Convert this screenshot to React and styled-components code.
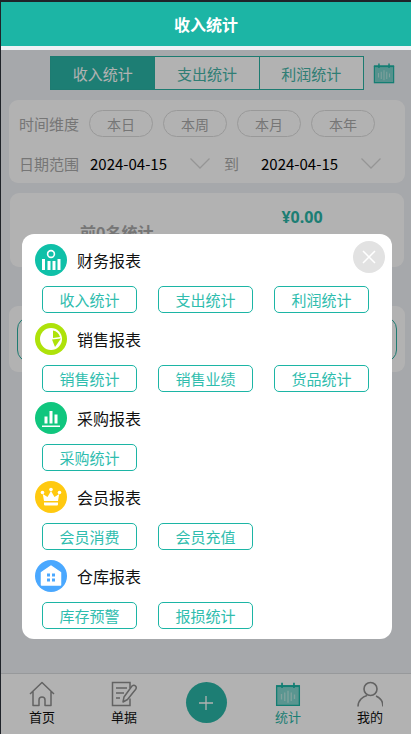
import React from "react";
import styled, { createGlobalStyle } from "styled-components";

const Global = createGlobalStyle`
  html, body { margin: 0; padding: 0; background: #1f2329; }
  * { box-sizing: border-box; }
  body { font-family: "Noto Sans CJK SC", "Noto Sans", sans-serif; }
`;

const Page = styled.div`
  position: relative;
  width: 411px;
  height: 734px;
  padding: 2px 0 0 1px;
  background: #1f2329;
  overflow: hidden;
  display: flex;
  flex-direction: column;
`;
const Header = styled.header`
  height: 44px;
  flex: none;
  background: #1cb5a5;
  color: #fff;
  font-size: 16px;
  font-weight: 700;
  display: flex;
  align-items: center;
  justify-content: center;
`;
const Main = styled.main`
  flex: 1;
  background: #eef1f5;
  padding: 10px 6px 0 8px;
  min-height: 0;
`;
const TabRow = styled.div`
  display: flex;
  align-items: center;
  padding-left: 41px;
  height: 34px;
`;
const Tabs = styled.div`
  display: flex;
  width: 314px;
  height: 34px;
  border: 1px solid #2ab0a2;
`;
const Tab = styled.div`
  flex: 1;
  display: flex;
  align-items: center;
  justify-content: center;
  font-size: 15px;
  background: ${p => (p.$active ? "#2ab5a6" : "#fff")};
  color: ${p => (p.$active ? "#fff" : "#45b5a8")};
  border-left: ${p => (p.$first ? "none" : "1px solid #2ab0a2")};
`;
const CalendarSlot = styled.div`
  margin-left: 9px;
  width: 22px;
  height: 22px;
  display: flex;
`;
const FilterCard = styled.section`
  margin-top: 10px;
  height: 83px;
  background: #fff;
  border-radius: 9px;
  padding: 10px 10px;
`;
const FilterRow = styled.div`
  display: flex;
  align-items: center;
  height: 27px;
  & + & { margin-top: 13px; }
`;
const Label = styled.span`
  width: 60px;
  flex: none;
  font-size: 15px;
  color: #aaa;
  white-space: nowrap;
`;
const Pill = styled.div`
  width: 64px;
  height: 27px;
  margin-left: ${p => (p.$first ? "10px" : "10px")};
  border: 1px solid #dcdcdc;
  border-radius: 14px;
  font-size: 14px;
  color: #aaa;
  display: flex;
  align-items: center;
  justify-content: center;
`;
const DateField = styled.div`
  width: 120px;
  margin-left: ${p => p.$ml}px;
  display: flex;
  align-items: center;
  justify-content: space-between;
  font-size: 15px;
  color: #000;
  white-space: nowrap;
`;
const To = styled.span`
  font-size: 15px;
  color: #aaa;
  margin-left: 14px;
`;
const SummaryCard = styled.section`
  margin-top: 10px;
  height: 74px;
  margin-left: 1px;
  margin-right: 1px;
  background: #fff;
  border-radius: 9px;
  display: flex;
  align-items: flex-start;
`;
const SummaryLabel = styled.div`
  margin: 27px 0 0 70px;
  font-size: 16px;
  line-height: 24px;
  font-weight: 700;
  color: #aaa;
`;
const SummaryValue = styled.div`
  margin: 13px 0 0 128px;
  font-size: 16px;
  line-height: 22px;
  font-weight: 700;
  color: #2ab5a6;
  font-family: "Noto Sans", sans-serif;
`;
const ListCard = styled.section`
  margin-top: 39px;
  height: 66px;
  background: #fff;
  border-radius: 9px;
  padding: 11px 8px 10px;
`;
const ListInner = styled.div`
  height: 45px;
  border: 1px solid #2ab0a2;
  border-radius: 12px;
`;
const Nav = styled.nav`
  height: 61px;
  flex: none;
  background: #fff;
  border-top: 1px solid #d9dcdf;
  display: flex;
  padding-top: 7px;
`;
const NavItem = styled.div`
  flex: 1;
  display: flex;
  flex-direction: column;
  align-items: center;
  font-size: 13px;
  line-height: 16px;
  color: ${p => (p.$active ? "#2ab5a6" : "#111")};
`;
const NavIcon = styled.div`
  width: 26px;
  height: 26px;
  margin-bottom: 2px;
`;
const AddButton = styled.div`
  width: 41px;
  height: 41px;
  border-radius: 50%;
  background: #2ab5a6;
  color: #fff;
  display: flex;
  align-items: center;
  justify-content: center;
  margin-top: 1px;
`;
const Overlay = styled.div`
  position: absolute;
  left: 1px;
  right: 0;
  top: 50px;
  bottom: 0;
  background: rgba(0, 0, 0, 0.3);
  padding: 184px 0 0 21px;
`;
const Modal = styled.div`
  position: relative;
  width: 370px;
  height: 405px;
  background: #fff;
  border-radius: 12px;
  padding: 10px 13px 0 13px;
`;
const CloseButton = styled.div`
  position: absolute;
  top: 7px;
  right: 7px;
  width: 32px;
  height: 32px;
  border-radius: 50%;
  background: #e2e2e2;
  display: flex;
  align-items: center;
  justify-content: center;
`;
const Section = styled.section`
  height: 79px;
`;
const SectionHead = styled.div`
  display: flex;
  align-items: center;
  height: 32px;
  font-size: 16px;
  color: #111;
  gap: 10px;
`;
const Badge = styled.div`
  width: 32px;
  height: 32px;
  border-radius: 50%;
  background: ${p => p.$bg};
  flex: none;
`;
const Links = styled.div`
  margin: 10px 0 0 7px;
  display: flex;
  gap: 21px;
`;
const LinkButton = styled.div`
  width: 95px;
  height: 27px;
  border: 1px solid #1cb5a5;
  border-radius: 5px;
  font-size: 15px;
  color: #2fbdae;
  display: flex;
  align-items: center;
  justify-content: center;
`;

const Stats = ({ size = 22 }) => (
  <svg width={size} height={size} viewBox="0 0 24 24">
    <path d="M1 4h22v19H1z" fill="#1cb5a5" opacity=".55" />
    <path d="M1.5 4.5h21v18h-21z" fill="none" stroke="#1cb5a5" strokeWidth="1.2" />
    <path d="M1 4h22v1.6H1z" fill="#1cb5a5" />
    <path d="M6.5 1.5v5M17.5 1.5v5" stroke="#1cb5a5" strokeWidth="1.6" />
    <path d="M6 12v5M9 10.5v8M12 9v11M15 10.5v8M18 12.5v4" stroke="#dff5f2" strokeOpacity=".6" strokeWidth="1.2" />
  </svg>
);
const Home = () => (
  <svg width="26" height="26" viewBox="0 0 26 26" fill="none" stroke="#8e8e8e" strokeWidth="1.5">
    <path d="M1 13 13 1.5 25 13M4 10.500V24.500h6V19q0-3 3-3t3 3v5.500h6V10.500" strokeLinejoin="round" />
  </svg>
);
const Doc = () => (
  <svg width="26" height="26" viewBox="0 0 26 26" fill="none" stroke="#8e8e8e" strokeWidth="1.5">
    <path d="M19 7V1.500H1.500v23H19v-7" />
    <path d="M5 7h11M5 12h8M5 17h4" />
    <path d="M12 21l1-5 8-11q2-1.500 3.500 0t0 3.500l-8 10z" strokeLinejoin="round" />
  </svg>
);
const User = () => (
  <svg width="26" height="26" viewBox="0 0 26 26" fill="none" stroke="#8e8e8e" strokeWidth="1.6">
    <circle cx="13.500" cy="8" r="6.500" />
    <path d="M1 25.500C1 19 6 15.500 10 14.500M26 25.500C26 21 23.500 17 19 15" />
  </svg>
);
const Finance = () => (
  <svg width="32" height="32" viewBox="0 0 32 32">
    <circle cx="16" cy="10" r="4.200" fill="#fff" />
    <circle cx="16" cy="10" r="2.600" fill="#0fc0a8" />
    <path d="M7 15h3v11H7zM12.500 17h3v9h-3zM17.500 17h3v9h-3zM22.500 15h3v11h-3z" fill="#fff" />
  </svg>
);
const Sales = () => (
  <svg width="32" height="32" viewBox="0 0 32 32">
    <circle cx="16" cy="16" r="11" fill="#fff" />
    <path d="M18 7.500a9 9 0 0 1 7 6.500l-7 1z" fill="#aee20a" />
    <path d="M17 16.500 26 15.500 20 24z" fill="#aee20a" />
  </svg>
);
const Purchase = () => (
  <svg width="32" height="32" viewBox="0 0 32 32" fill="#fff">
    <path d="M9.500 14.500h3v7h-3zM14.500 9h3v12.500h-3zM19.500 12.500h3v9h-3zM7 23.500h18V25H7z" />
  </svg>
);
const Crown = () => (
  <svg width="32" height="32" viewBox="0 0 32 32" fill="#fff">
    <circle cx="16" cy="8.500" r="1.800" />
    <circle cx="7.500" cy="11.500" r="1.800" />
    <circle cx="24.500" cy="11.500" r="1.800" />
    <path d="M9 20 7.800 13l4.700 3L16 10l3.500 6 4.700-3L23 20z" />
    <path d="M9 21.500h14v2q0 1-1 1H10q-1 0-1-1z" />
  </svg>
);
const Warehouse = () => (
  <svg width="32" height="32" viewBox="0 0 32 32">
    <path d="M16 6 25.500 12.500V25h-19V12.500z" fill="#fff" stroke="#fff" strokeLinejoin="round" strokeWidth="1.500" />
    <path d="M12 13.500h3v3h-3zM17 13.500h3v3h-3zM12 18.500h3v3h-3zM17 18.500h3v3h-3z" fill="#4aa8ff" />
  </svg>
);
const Chevron = () => (
  <svg width="20" height="11" viewBox="0 0 20 11" fill="none" stroke="#d6d6d6" strokeWidth="1.300">
    <path d="M.5.500 10 10 19.500.500" />
  </svg>
);

const groups = [
  { title: "财务报表", bg: "#0fc0a8", Icon: Finance, links: ["收入统计", "支出统计", "利润统计"] },
  { title: "销售报表", bg: "#aee20a", Icon: Sales, links: ["销售统计", "销售业绩", "货品统计"] },
  { title: "采购报表", bg: "#10c67e", Icon: Purchase, links: ["采购统计"] },
  { title: "会员报表", bg: "#ffc910", Icon: Crown, links: ["会员消费", "会员充值"] },
  { title: "仓库报表", bg: "#4aa8ff", Icon: Warehouse, links: ["库存预警", "报损统计"] },
];

export default function App() {
  return (
    <Page>
      <Global />
      <Header>收入统计</Header>
      <Main>
        <TabRow>
          <Tabs>
            <Tab $active $first>收入统计</Tab>
            <Tab>支出统计</Tab>
            <Tab>利润统计</Tab>
          </Tabs>
          <CalendarSlot><Stats /></CalendarSlot>
        </TabRow>
        <FilterCard>
          <FilterRow>
            <Label>时间维度</Label>
            {["本日", "本周", "本月", "本年"].map(t => <Pill key={t}>{t}</Pill>)}
          </FilterRow>
          <FilterRow>
            <Label>日期范围</Label>
            <DateField $ml={11}>2024-04-15<Chevron /></DateField>
            <To>到</To>
            <DateField $ml={22}>2024-04-15<Chevron /></DateField>
          </FilterRow>
        </FilterCard>
        <SummaryCard>
          <SummaryLabel>前0名统计</SummaryLabel>
          <SummaryValue>¥0.00</SummaryValue>
        </SummaryCard>
        <ListCard><ListInner /></ListCard>
      </Main>
      <Nav>
        <NavItem><NavIcon><Home /></NavIcon>首页</NavItem>
        <NavItem><NavIcon><Doc /></NavIcon>单据</NavItem>
        <NavItem>
          <AddButton>
            <svg width="16" height="16" viewBox="0 0 16 16" stroke="#fff" strokeWidth="1.300"><path d="M8 1v14M1 8h14" /></svg>
          </AddButton>
        </NavItem>
        <NavItem $active><NavIcon><Stats size={26} /></NavIcon>统计</NavItem>
        <NavItem><NavIcon><User /></NavIcon>我的</NavItem>
      </Nav>
      <Overlay>
        <Modal>
          <CloseButton>
            <svg width="16" height="16" viewBox="0 0 16 16" stroke="#fff" strokeWidth="1.500"><path d="M2 2l12 12M14 2 2 14" /></svg>
          </CloseButton>
          {groups.map(({ title, bg, Icon, links }) => (
            <Section key={title}>
              <SectionHead>
                <Badge $bg={bg}><Icon /></Badge>
                {title}
              </SectionHead>
              <Links>
                {links.map(l => <LinkButton key={l}>{l}</LinkButton>)}
              </Links>
            </Section>
          ))}
        </Modal>
      </Overlay>
    </Page>
  );
}
